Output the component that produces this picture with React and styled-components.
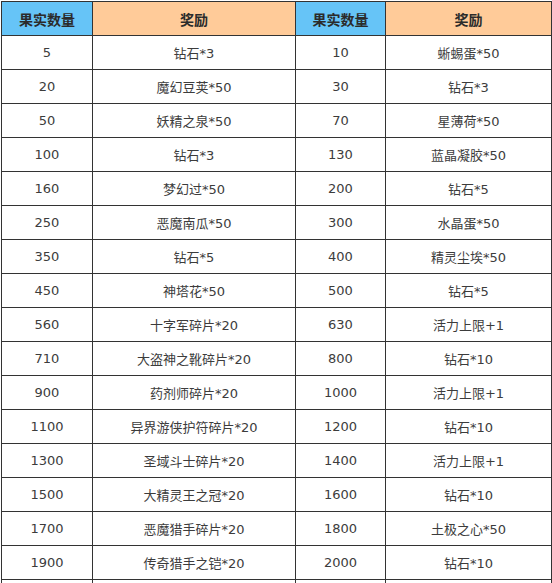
import React from 'react'
import styled, { createGlobalStyle } from 'styled-components'

const GlobalStyle = createGlobalStyle`
  body {
    margin: 1px 0 0 1px;
    background: #fff;
    font-family: 'DejaVu Sans', 'Noto Sans CJK SC', sans-serif;
  }
`

const Table = styled.table`
  border-collapse: collapse;
  table-layout: fixed;
  width: 550px;
  border: 1px solid #333;
`

const Col = styled.col`
  width: ${({ w }) => w}px;
`

const HeadCell = styled.th`
  height: 33px;
  padding: 0;
  border: 1px solid #333;
  background: ${({ tone }) => tone === 'blue' ? '#66c4f7' : '#ffcb99'};
  color: #2b2b2b;
  font-family: 'Noto Sans CJK SC', sans-serif;
  font-size: 14px;
  font-weight: 700;
  text-align: center;
`

const Cell = styled.td`
  height: 33px;
  padding: 0;
  border: 1px solid #333;
  color: #3c3c3c;
  font-size: 13px;
  text-align: center;
  white-space: nowrap;
`

const rows = [
  ['5', '钻石*3', '10', '蜥蜴蛋*50'],
  ['20', '魔幻豆荚*50', '30', '钻石*3'],
  ['50', '妖精之泉*50', '70', '星薄荷*50'],
  ['100', '钻石*3', '130', '蓝晶凝胶*50'],
  ['160', '梦幻过*50', '200', '钻石*5'],
  ['250', '恶魔南瓜*50', '300', '水晶蛋*50'],
  ['350', '钻石*5', '400', '精灵尘埃*50'],
  ['450', '神塔花*50', '500', '钻石*5'],
  ['560', '十字军碎片*20', '630', '活力上限+1'],
  ['710', '大盗神之靴碎片*20', '800', '钻石*10'],
  ['900', '药剂师碎片*20', '1000', '活力上限+1'],
  ['1100', '异界游侠护符碎片*20', '1200', '钻石*10'],
  ['1300', '圣域斗士碎片*20', '1400', '活力上限+1'],
  ['1500', '大精灵王之冠*20', '1600', '钻石*10'],
  ['1700', '恶魔猎手碎片*20', '1800', '土极之心*50'],
  ['1900', '传奇猎手之铠*20', '2000', '钻石*10'],
  ['', '', '', ''],
]

export default function App() {
  return (
    <>
      <GlobalStyle />
      <Table>
        <colgroup>
          <Col w={91} />
          <Col w={203} />
          <Col w={90} />
          <Col w={166} />
        </colgroup>
        <thead>
          <tr>
            <HeadCell tone='blue'>果实数量</HeadCell>
            <HeadCell tone='orange'>奖励</HeadCell>
            <HeadCell tone='blue'>果实数量</HeadCell>
            <HeadCell tone='orange'>奖励</HeadCell>
          </tr>
        </thead>
        <tbody>
          {rows.map((r, i) => (
            <tr key={i}>
              {r.map((c, j) => <Cell key={j}>{c}</Cell>)}
            </tr>
          ))}
        </tbody>
      </Table>
    </>
  )
}
